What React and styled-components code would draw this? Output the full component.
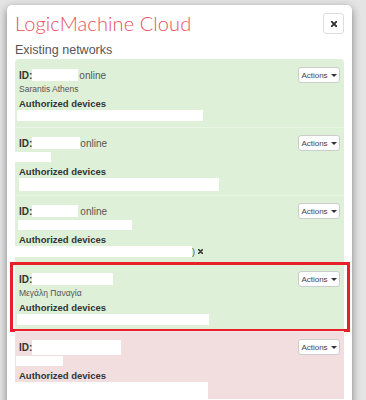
import React from 'react'
import styled, { createGlobalStyle } from 'styled-components'

const Global = createGlobalStyle`
  html, body {
    margin: 0;
    padding: 0;
    background: #e4e4e4;
    overflow: hidden;
  }
  body {
    font-family: 'Liberation Sans', Arial, sans-serif;
    color: #333;
  }
`

const Page = styled.div`
  height: 400px;
  padding: 5px 14px 0 7px;
  box-sizing: border-box;
  overflow: hidden;
`
const Modal = styled.div`
  width: 345px;
  height: 420px;
  background: #fff;
  border-radius: 5px;
  box-shadow: 0 3px 9px rgba(0, 0, 0, 0.45);
  padding: 8px 8px 0;
  box-sizing: border-box;
`
const Header = styled.div`
  display: flex;
  justify-content: space-between;
  align-items: flex-start;
`
const Title = styled.h1`
  margin: -3px 0 0;
  font-family: Lato, 'Open Sans', sans-serif;
  font-weight: 300;
  font-size: 20px;
  line-height: 26px;
  color: #e8505a;
  letter-spacing: 0.1px;
`
const CloseButton = styled.button`
  width: 21px;
  height: 21px;
  padding: 0;
  border: 1px solid #ddd;
  border-radius: 3px;
  background: #fff;
  display: flex;
  align-items: center;
  justify-content: center;
`
const Subtitle = styled.div`
  margin-top: 7px;
  font-size: 12.5px;
  line-height: 15px;
  color: #555;
`
const List = styled.div`
  margin-top: 1px;
`
const Card = styled.div`
  position: relative;
  background: ${(p) => (p.$tone === 'danger' ? '#f2dede' : '#dff0d8')};
  border-top: 1px solid ${(p) => (p.$first ? 'transparent' : p.$tone === 'danger' ? '#f7e8e8' : '#eaf5e5')};
  border-radius: ${(p) => (p.$first ? '4px 4px 0 0' : '0')};
  padding: 8px 4px 8px;
  height: 68px;
  box-sizing: border-box;

  ${(p) =>
    p.$highlight &&
    `
    &::after {
      content: '';
      position: absolute;
      top: -2px;
      bottom: -1px;
      left: -5px;
      right: -6px;
      border: 3px solid #e8202a;
      pointer-events: none;
    }
  `}
`
const ActionsButton = styled.button`
  position: absolute;
  top: 7px;
  right: 4px;
  width: 42px;
  height: 16px;
  padding: 0;
  border: 1px solid #ccc;
  border-radius: 3px;
  background: #fff;
  font-family: 'Liberation Sans', Arial, sans-serif;
  font-size: 8px;
  color: #444;
  display: flex;
  align-items: center;
  justify-content: center;
  gap: 3px;
`
const Caret = styled.span`
  width: 0;
  height: 0;
  border-left: 3px solid transparent;
  border-right: 3px solid transparent;
  border-top: 3px solid #333;
`
const IdLine = styled.div`
  display: flex;
  align-items: center;
  height: 14px;
  font-size: 10px;
  color: #555;
`
const IdLabel = styled.b`
  color: #333;
  margin-right: 1px;
`
const Blank = styled.span`
  display: inline-block;
  background: #fff;
  width: ${(p) => p.$w}px;
  height: ${(p) => p.$h || 11}px;
  margin-left: ${(p) => p.$ml || 0}px;
  flex-shrink: 0;
`
const Online = styled.span`
  margin-left: ${(p) => p.$gap}px;
`
const Place = styled.div`
  height: 13px;
  display: flex;
  align-items: center;
  font-size: 8.5px;
  color: #555;
`
const DevicesLabel = styled.div`
  margin-top: 3px;
  height: 11px;
  line-height: 11px;
  font-size: 9.5px;
  font-weight: bold;
  color: #333;
`
const DeviceRow = styled.div`
  display: flex;
  align-items: center;
  margin-top: 1px;
  font-size: 9px;
  color: #555;
`
const RemoveIcon = styled.span`
  display: flex;
  margin-left: 3px;
`

const Cross = ({ size = 7 }) => (
  <svg width={size} height={size} viewBox="0 0 8 8">
    <path d="M1 1L7 7M7 1L1 7" stroke="#333" strokeWidth="2.4" strokeLinecap="square" />
  </svg>
)

const networks = [
  { idW: 46, online: true, gap: 1, place: 'Sarantis Athens', dev: { w: 186, h: 11, ml: -2 } },
  { idW: 48, online: true, gap: 0, placeBox: { w: 36, ml: -4 }, dev: { w: 200, h: 13, ml: 0 } },
  { idW: 46, online: true, gap: 2, placeBox: { w: 114, ml: -1 }, dev: { w: 177, h: 11, ml: -4, removable: true } },
  { idW: 81, place: 'Μεγάλη Παναγία', highlight: true, dev: { w: 192, h: 11, ml: -2 } },
  { idW: 89, idH: 15, tone: 'danger', placeBox: { w: 47, ml: -3 }, dev: { w: 193, h: 20, ml: -4 } },
]

const App = () => (
  <Page>
    <Global />
    <Modal>
      <Header>
        <Title>LogicMachine Cloud</Title>
        <CloseButton aria-label="Close">
          <Cross size={6} />
        </CloseButton>
      </Header>
      <Subtitle>Existing networks</Subtitle>
      <List>
        {networks.map((n, i) => (
          <Card key={i} $first={i === 0} $tone={n.tone} $highlight={n.highlight}>
            <ActionsButton>
              Actions <Caret />
            </ActionsButton>
            <IdLine>
              <IdLabel>ID:</IdLabel>
              <Blank $w={n.idW} $h={n.idH || 12} $ml={-1} />
              {n.online && <Online $gap={n.gap}>online</Online>}
            </IdLine>
            <Place>
              {n.place ? n.place : <Blank $w={n.placeBox.w} $h={10} $ml={n.placeBox.ml} />}
            </Place>
            <DevicesLabel>Authorized devices</DevicesLabel>
            <DeviceRow>
              <Blank $w={n.dev.w} $h={n.dev.h} $ml={n.dev.ml} />
              {n.dev.removable && (
                <>
                  <span>)</span>
                  <RemoveIcon>
                    <Cross size={5} />
                  </RemoveIcon>
                </>
              )}
            </DeviceRow>
          </Card>
        ))}
      </List>
    </Modal>
  </Page>
)

export default App
